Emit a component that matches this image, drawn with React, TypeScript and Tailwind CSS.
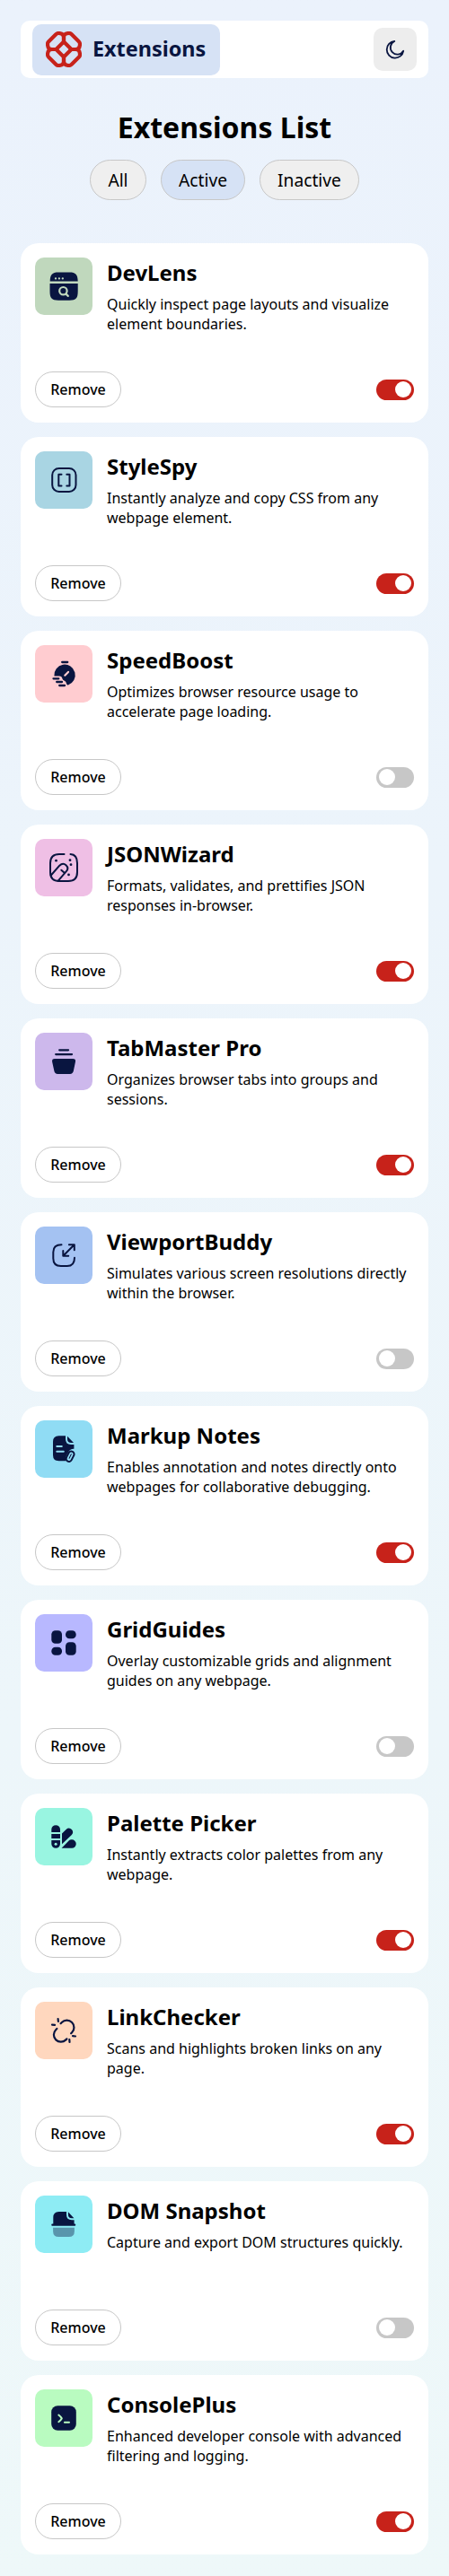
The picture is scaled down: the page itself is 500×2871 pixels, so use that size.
import { useState, type ReactNode } from "react";

const NAVY = "#091540";

type Extension = {
  name: string;
  description: string;
  active: boolean;
  tile: string;
  icon: ReactNode;
};

const line = {
  fill: "none",
  stroke: NAVY,
  strokeWidth: 2,
  strokeLinecap: "round" as const,
  strokeLinejoin: "round" as const,
};

const extensions: Extension[] = [
  {
    name: "DevLens",
    description: "Quickly inspect page layouts and visualize element boundaries.",
    active: true,
    tile: "#c0d8bd",
    icon: (
      <>
        <path fill={NAVY} d="M16.7 26.4c.2-7.500 2.400-10 9.300-10h12.400c6.900 0 9.100 2.500 9.300 10zM16.500 29h31.200v8.500c0 8-2 10.200-9.300 10.200H26c-7.300 0-9.500-2.200-9.500-10.200z" />
        <g fill="#c0d8bd">
          <circle cx="23" cy="23.400" r="1.150" />
          <circle cx="26.900" cy="23.400" r="1.150" />
          <circle cx="30.800" cy="23.400" r="1.150" />
        </g>
        <circle cx="31.400" cy="37.200" r="4.200" fill="none" stroke="#c0d8bd" strokeWidth="2.200" />
        <path d="M34.500 40.600l2.300 2.300" stroke="#c0d8bd" strokeWidth="2.200" strokeLinecap="round" />
      </>
    ),
  },
  {
    name: "StyleSpy",
    description: "Instantly analyze and copy CSS from any webpage element.",
    active: true,
    tile: "#a9d5e3",
    icon: (
      <g {...line}>
        <rect x="19.200" y="18.900" width="26.300" height="26" rx="7.500" />
        <path d="M29.500 25.800h-3.200v12.600h3.200M35.300 25.800h3.200v12.600h-3.200" />
      </g>
    ),
  },
  {
    name: "SpeedBoost",
    description: "Optimizes browser resource usage to accelerate page loading.",
    active: false,
    tile: "#ffccd0",
    icon: (
      <>
        <path fill={NAVY} d="M21.400 34.400A11.700 11.700 0 1 1 36.800 44.400Q35.200 44.600 35 42.800Q34.600 40.500 32.400 39.600Q31 39 30.600 37.800Q30 34.600 27 34.500z" />
        <path {...line} strokeWidth={2.300} d="M30.200 19h6M20.500 37.300h5.800M24.200 41h5.800M27.200 45h5.800" />
        <path d="M33.300 33.700l3.700-3.800" stroke="#ffccd0" strokeWidth="2.200" strokeLinecap="round" />
      </>
    ),
  },
  {
    name: "JSONWizard",
    description: "Formats, validates, and prettifies JSON responses in-browser.",
    active: true,
    tile: "#efbfe5",
    icon: (
      <>
        <g {...line}>
          <path d="M32.500 17H27q-10 0-10 10v10q0 10 10 10h10q10 0 10-10V27q0-9.600-7.500-10" />
          <path d="M17.800 40.500L27.300 29.700Q31 26 34.500 29.200Q38 32.500 34.800 36.200L25.600 46.800M29.300 34.700l3.400 3" />
        </g>
        <g fill={NAVY}>
          <circle cx="23.500" cy="24.200" r="1.400" />
          <circle cx="39" cy="23.700" r="1.400" />
          <circle cx="40" cy="28.700" r="1.400" />
          <circle cx="37.500" cy="39.900" r="1.400" />
        </g>
      </>
    ),
  },
  {
    name: "TabMaster Pro",
    description: "Organizes browser tabs into groups and sessions.",
    active: true,
    tile: "#cdb8ec",
    icon: (
      <>
        <path {...line} strokeWidth={2.300} d="M27.200 19.300h9.800M23.200 24.100h17.800" />
        <path fill={NAVY} d="M21.900 29h20.300q3.300 0 2.800 3.200l-2.200 10.600q-.7 3.100-3.800 3.100H25.200q-3.200 0-3.800-3.100l-2.300-10.600q-.4-3.200 2.800-3.200z" />
      </>
    ),
  },
  {
    name: "ViewportBuddy",
    description: "Simulates various screen resolutions directly within the browser.",
    active: false,
    tile: "#a4c2f2",
    icon: (
      <path {...line} d="M29.500 20.300q-9.200 0-9.200 8.200v7q0 8.500 8.500 8.500h7q8.200 0 8.200-9.300M31.300 32.700L43.700 20.300M37.900 20.300h5.900v5.900M31.300 26.900v5.800h5.900" />
    ),
  },
  {
    name: "Markup Notes",
    description: "Enables annotation and notes directly onto webpages for collaborative debugging.",
    active: true,
    tile: "#90dcf4",
    icon: (
      <>
        <path fill={NAVY} d="M26.500 17.300H34v3.500q0 6.200 6 6.200h3.400v4.800q-4.200-.3-6.600 4.200-3.400 5.300-2.800 9.300h-7.500q-6.500 0-6.500-6.500V23.800q0-6.500 6.500-6.500zM36 17.700l7 7.400h-2.500q-4.500 0-4.500-4z" />
        <path d="M24.300 28.900h5.500M24.300 34.700h7.500" stroke="#90dcf4" strokeWidth="2" strokeLinecap="round" />
        <g transform="rotate(27 39.100 40.200)">
          <rect x="35.900" y="34.200" width="6.400" height="12" rx="3.200" fill="none" stroke={NAVY} strokeWidth="2" />
          <path d="M39.100 37.500v5" stroke={NAVY} strokeWidth="1" strokeLinecap="round" />
        </g>
      </>
    ),
  },
  {
    name: "GridGuides",
    description: "Overlay customizable grids and alignment guides on any webpage.",
    active: false,
    tile: "#b8b8ff",
    icon: (
      <g fill={NAVY}>
        <rect x="18.300" y="18.200" width="11.700" height="14.600" rx="4.300" />
        <rect x="34" y="18.200" width="11.700" height="9" rx="4.300" />
        <rect x="18.300" y="36.800" width="11.700" height="9" rx="4.300" />
        <rect x="34" y="31.200" width="11.700" height="14.600" rx="4.300" />
      </g>
    ),
  },
  {
    name: "Palette Picker",
    description: "Instantly extracts color palettes from any webpage.",
    active: true,
    tile: "#99f5e1",
    icon: (
      <>
        <path fill={NAVY} d="M18.300 27v-3a4.850 4.850 0 0 1 9.700 0v3zM18.300 28.900H28v5.200h-9.700zM18.300 36H28v4a4.850 4.850 0 0 1-9.700 0zM30 28.500l4.600-4.600q3.300-3 6.300.1 2.700 3.200-.3 6.200L30 40.300zM29.600 44.800l8.300-8.500q1-1 2.500-1H41a4.750 4.750 0 0 1 0 9.500z" />
        <circle cx="23.100" cy="40.300" r="1.500" fill="#99f5e1" />
      </>
    ),
  },
  {
    name: "LinkChecker",
    description: "Scans and highlights broken links on any page.",
    active: true,
    tile: "#ffd7be",
    icon: (
      <path {...line} strokeWidth={2.200} d="M28.600 24.200l1.200-1.200a7.900 7.900 0 0 1 11.300 11.300l-1 1M24.400 30l-1.200 1.200a7.900 7.900 0 0 0 11.200 11.200l1-1M19 25.600l3 .3M25.600 19l.3 3M42 38.200l3 .3M38.300 42l.2 3" />
    ),
  },
  {
    name: "DOM Snapshot",
    description: "Capture and export DOM structures quickly.",
    active: false,
    tile: "#8eecf4",
    icon: (
      <>
        <path fill={NAVY} d="M26.500 18H35v3q0 6.200 6 6.200h2.600v4.400h.6a1 1 0 0 1 0 2.100H19.300a1 1 0 0 1 0-2.100h1V24.500q0-6.500 6.200-6.500zM36.900 18.300l6.500 7H41q-4.100 0-4.100-4z" />
        <path fill={NAVY} fillOpacity=".4" d="M20.100 35.700h23.800v4q0 6.300-6.300 6.300H26.400q-6.300 0-6.300-6.300z" />
      </>
    ),
  },
  {
    name: "ConsolePlus",
    description: "Enhanced developer console with advanced filtering and logging.",
    active: true,
    tile: "#b9fbc0",
    icon: (
      <>
        <rect x="18.200" y="18.200" width="27.600" height="27.600" rx="7" fill={NAVY} />
        <path fill="none" stroke="#b9fbc0" strokeWidth="2" strokeLinecap="round" strokeLinejoin="round" d="M26.300 28.600q2.300 1.900 3.500 3.800-1.200 2-3.500 3.800M32.900 36.700h5.100" />
      </>
    ),
  },
];

function LogoMark() {
  const petal = "M2 14Q2 12.500 3 11.500L11 3.500Q12.500 2 14 2Q20 2 20 7V11.500L11.500 20H7Q2 20 2 14Z";
  return (
    <svg width="40" height="40" viewBox="0 0 40 40" fill="none" stroke="#c7221a" strokeWidth="4.200" strokeLinejoin="round">
      <path d={petal} />
      <path d={petal} transform="rotate(90 20 20)" />
      <path d={petal} transform="rotate(180 20 20)" />
      <path d={petal} transform="rotate(270 20 20)" />
    </svg>
  );
}

function Header() {
  return (
    <header className="flex h-16 items-center justify-between rounded-[10px] bg-white px-[13px]">
      <div className="flex h-[57px] w-[209px] items-center gap-[12px] rounded-[10px] bg-[#d6e2f5] pl-[15px]">
        <LogoMark />
        <span className="text-[23.400px] leading-none font-bold text-[#091540]">Extensions</span>
      </div>
      <button aria-label="Toggle theme" className="flex size-12 items-center justify-center rounded-[10px] bg-[#ededed]">
        <svg width="22" height="22" viewBox="0 0 22 22" fill="none" stroke={NAVY} strokeWidth="1.800" strokeLinejoin="round">
          <path d="M10.300 2A7.700 7.700 0 1 0 20.200 12.800A9.300 9.300 0 1 1 10.300 2z" />
        </svg>
      </button>
    </header>
  );
}

function Filters() {
  const [selected, setSelected] = useState("Active");
  return (
    <div className="mt-[13px] flex justify-center gap-4">
      {[
        { label: "All", width: "w-[63px]" },
        { label: "Active", width: "w-[94px]" },
        { label: "Inactive", width: "w-[111px]" },
      ].map(({ label, width }) => (
        <button
          key={label}
          onClick={() => setSelected(label)}
          className={`flex h-[45px] ${width} items-center justify-center rounded-[25px] border border-[#c7c7c7] text-[19.200px] leading-[26px] ${
            selected === label ? "bg-[#d6e2f5]" : "bg-[#efefef]"
          }`}
        >
          {label}
        </button>
      ))}
    </div>
  );
}

function Toggle({ initial }: { initial: boolean }) {
  const [on, setOn] = useState(initial);
  return (
    <button
      role="switch"
      aria-checked={on}
      onClick={() => setOn(!on)}
      className={`flex h-[23px] w-[42px] items-start rounded-full px-[3px] pt-[2px] ${on ? "justify-end bg-[#c7221a]" : "justify-start bg-[#c7c7c7]"}`}
    >
      <span className="size-[18px] rounded-full bg-white" />
    </button>
  );
}

function Card({ ext }: { ext: Extension }) {
  return (
    <li className="flex h-[200px] flex-col justify-between rounded-[20px] bg-white px-4 pt-4 pb-[17px]">
      <div className="flex gap-4">
        <svg width="64" height="64" viewBox="0 0 64 64" className="shrink-0">
          <rect width="64" height="64" rx="10" fill={ext.tile} />
          {ext.icon}
        </svg>
        <div>
          <h2 className="text-2xl leading-[33px] font-bold">{ext.name}</h2>
          <p className="mt-2 text-base leading-[22px]">{ext.description}</p>
        </div>
      </div>
      <div className="flex items-center justify-between">
        <button className="flex h-10 w-24 items-center justify-center rounded-full border border-[#c7c7c7] text-base leading-[22px] font-medium">
          Remove
        </button>
        <Toggle initial={ext.active} />
      </div>
    </li>
  );
}

export default function App() {
  return (
    <main className="h-[2871px] w-full bg-linear-to-b from-[#ebf2fc] to-[#eef8f9] px-[23px] pt-[23px] font-['Noto_Sans',sans-serif] text-black">
      <Header />
      <h1 className="mt-[31px] text-center text-[32px] leading-[47px] font-bold">Extensions List</h1>
      <Filters />
      <ul className="mt-12 flex flex-col gap-4">
        {extensions.map((ext) => (
          <Card key={ext.name} ext={ext} />
        ))}
      </ul>
    </main>
  );
}
